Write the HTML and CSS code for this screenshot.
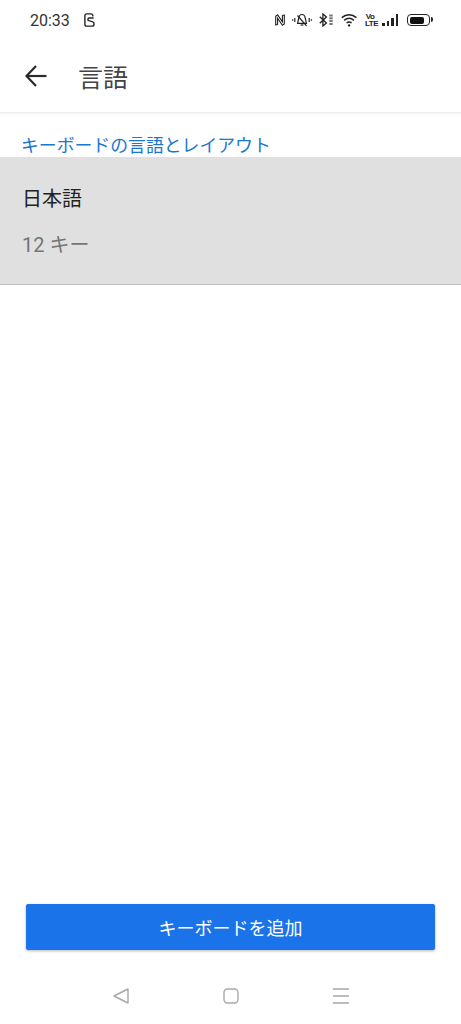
FILE: index.html
```html
<!DOCTYPE html>
<html lang="ja">
<head>
  <meta charset="UTF-8" />
  <meta name="viewport" content="width=461, initial-scale=1" />
  <title>言語</title>
  <link rel="stylesheet" href="styles.css">
</head>
<body>
  <div class="wrapper">

    <!-- Status bar -->
    <div class="status-bar">
      <div class="status-left">
        <span class="clock">20:33</span>
        <svg class="icon-app" width="11" height="14" viewBox="0 0 11 14" fill="none" stroke="#222" stroke-width="1.4">
          <path d="M8.8 3.4V2.6C8.8 1.6 8.1 0.9 7.1 0.9H2.6C1.6 0.9 0.9 1.6 0.9 2.6V11.2C0.9 12.3 1.6 13.1 2.6 13.1H7.9C9.2 13.1 10.1 12.1 10.1 10.9C10.1 9.7 9.3 8.9 8.1 8.6L4.8 7.7C3.5 7.3 3.6 5 5.1 5H9.6"/>
        </svg>
      </div>
      <div class="status-right">
        <svg width="10" height="12" viewBox="0 0 10 12" fill="none" stroke="#222" stroke-width="1.1">
          <path d="M0.7 2.3V11L2.6 10.4V4.2L7.4 11.2L9.3 10V1L7.4 1.6V7.8L2.6 0.9L0.7 2.3Z"/>
        </svg>
        <svg width="20" height="14" viewBox="0 0 20 14" fill="none" stroke="#222" stroke-width="1.2">
          <path d="M10 1.5C7.7 1.5 6.9 3.4 6.7 5.5L5.6 10.4H14.4L13.3 5.5C13.1 3.4 12.3 1.5 10 1.5Z"/>
          <path d="M8.6 12H11.4"/>
          <path d="M5.5 2.5L14.5 12.8"/>
          <path d="M0.6 6.2V7.8M2.8 5V9M17.2 5V9M19.4 6.2V7.8"/>
        </svg>
        <svg width="15" height="14" viewBox="0 0 15 14" fill="none" stroke="#222" stroke-width="1.3">
          <path d="M0.8 3.8L7.4 10L3.9 13V1L7.4 4L0.8 10.2"/>
          <path d="M12 1.5V12.5" stroke="#777" stroke-width="3.4" stroke-dasharray="2 0.8"/>
        </svg>
        <svg class="icon-wifi" width="17" height="14" viewBox="0 0 17 14" fill="none" stroke="#222" stroke-width="1.5">
          <path d="M0.8 4.6C5.2 0.8 11 0.8 15.4 4.6"/>
          <path d="M3.2 7.3C6.2 4.9 10 4.9 13 7.3"/>
          <path d="M5.6 9.9C7.1 8.8 9.1 8.8 10.6 9.9"/>
          <circle cx="8.1" cy="12.4" r="1.2" fill="#222" stroke="none"/>
        </svg>
        <span class="volte">Vo<br>LTE</span>
        <div class="signal">
          <i class="bar-1"></i><i class="bar-2"></i><i class="bar-3"></i><i class="bar-4"></i>
        </div>
        <div class="battery"><div class="battery-fill"></div></div>
      </div>
    </div>

    <!-- Toolbar -->
    <div class="toolbar">
      <svg class="back" width="24" height="24" viewBox="0 0 24 24" fill="none" stroke="#2b2b2b" stroke-width="2.2">
        <path d="M22.5 12H2.5"/>
        <path d="M12 2L2.5 12L12 22"/>
      </svg>
      <div class="toolbar-title">言語</div>
    </div>

    <div class="section-label">キーボードの言語とレイアウト</div>

    <div class="list-item">
      <div class="item-title">日本語</div>
      <div class="item-sub">12 キー</div>
    </div>

    <div class="spacer"></div>

    <div class="add-btn">キーボードを追加</div>

    <!-- Nav bar -->
    <div class="nav-bar">
      <svg width="16" height="16" viewBox="0 0 16 16" fill="none" stroke="#a8a8a8" stroke-width="1.4" stroke-linejoin="round">
        <path d="M15 1L1 8L15 15Z"/>
      </svg>
      <svg width="16" height="16" viewBox="0 0 16 16" fill="none" stroke="#a8a8a8" stroke-width="1.4">
        <rect x="1" y="1" width="14" height="14" rx="3.5"/>
      </svg>
      <svg width="16" height="16" viewBox="0 0 16 16" fill="none" stroke="#a8a8a8" stroke-width="1.4">
        <path d="M0 1H16M0 8H16M0 15H16"/>
      </svg>
    </div>
  </div>
</body>
</html>
```

FILE: styles.css
```css
html, body {
  margin: 0;
  padding: 0;
  height: 100%;
  background: #fff;
  font-family: Roboto, "Noto Sans CJK JP", sans-serif;
}

.wrapper {
  height: 1024px;
  display: flex;
  flex-direction: column;
}

.status-bar {
  height: 40px;
  display: flex;
  justify-content: space-between;
  align-items: center;
  padding: 0 31px 0 30px;
  color: #333;
}

.status-left {
  display: flex;
  align-items: center;
  gap: 14px;
}

.clock {
  font-size: 16px;
}

.status-right {
  display: flex;
  align-items: center;
  gap: 7px;
}

.volte {
  width: 10px;
  font-size: 8px;
  line-height: 7px;
  letter-spacing: -0.5px;
  font-weight: 700;
  text-align: center;
  color: #222;
  font-family: "Liberation Sans", sans-serif;
}

.signal {
  display: flex;
  align-items: flex-end;
  gap: 2px;
  height: 12px;
  margin-right: 2px;
}

.signal i {
  display: block;
  width: 2.5px;
  background: #222;
}

.bar-1 { height: 3px; }
.bar-2 { height: 5px; }
.bar-3 { height: 8px; }
.bar-4 { height: 12px; }

.battery {
  box-sizing: border-box;
  width: 23px;
  height: 12px;
  border: 1.5px solid #222;
  border-radius: 4px;
  padding: 1.5px;
  position: relative;
}

.battery::after {
  content: "";
  position: absolute;
  right: -4px;
  top: 2px;
  width: 2px;
  height: 5px;
  background: #222;
  border-radius: 0 2px 2px 0;
}

.battery-fill {
  width: 14px;
  height: 100%;
  background: #111;
  border-radius: 2px;
}

.toolbar {
  height: 73px;
  box-sizing: border-box;
  display: flex;
  align-items: center;
  padding-left: 24px;
  border-bottom: 1px solid #eee;
  box-shadow: 0 1px 2px rgba(0,0,0,0.06);
}

.toolbar-title {
  margin-left: 30px;
  font-size: 25px;
  color: #444;
}

.section-label {
  padding: 21px 21px 0;
  height: 23px;
  font-size: 17.85px;
  line-height: 23px;
  color: #1976d2;
}

.list-item {
  height: 128px;
  box-sizing: border-box;
  padding: 28px 22px 0;
  background: #e0e0e0;
  border-bottom: 1px solid #bdbdbd;
}

.item-title {
  font-size: 20px;
  line-height: 28px;
  color: #222;
}

.item-sub {
  margin-top: 18px;
  font-size: 20px;
  line-height: 28px;
  color: #757575;
}

.spacer {
  flex: 1;
}

.add-btn {
  margin: 0 26px;
  height: 46px;
  background: #1a73e8;
  border-radius: 2px;
  box-shadow: 0 1px 3px rgba(0,0,0,0.3);
  color: #fff;
  font-size: 18px;
  display: flex;
  justify-content: center;
  align-items: center;
}

.nav-bar {
  height: 74px;
  display: flex;
  justify-content: center;
  align-items: center;
  gap: 94px;
  padding-top: 18px;
  box-sizing: border-box;
}
```
